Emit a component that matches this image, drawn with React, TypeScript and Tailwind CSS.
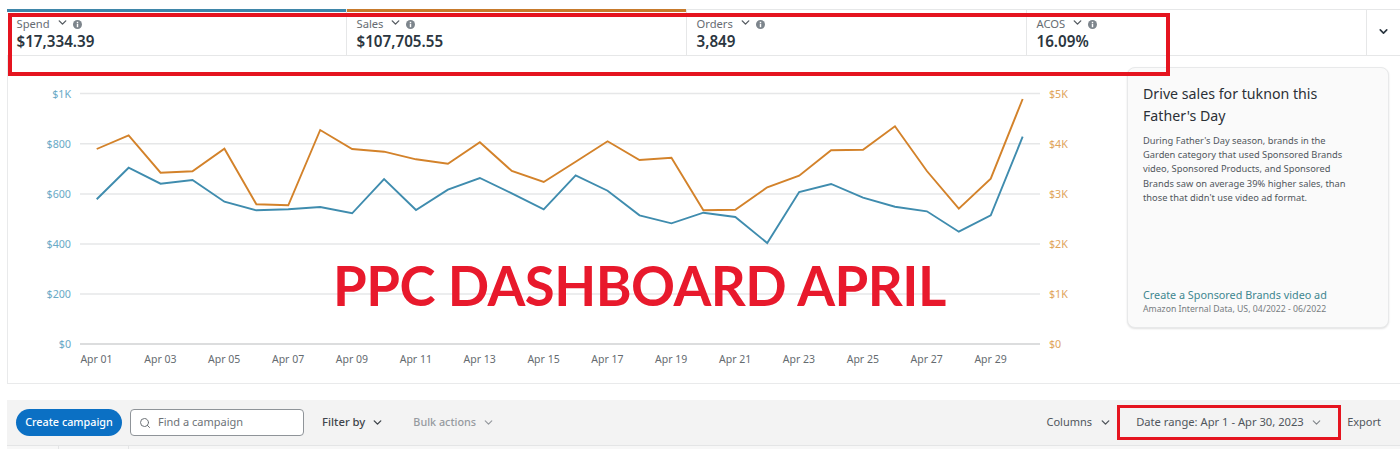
import React from 'react';
import { ChevronDown, Search } from 'lucide-react';

const sans = 'font-["Noto_Sans",sans-serif]';

const metrics = [
  { label: 'Spend', value: '$17,334.39', bar: 'bg-[#3f86a9]' },
  { label: 'Sales', value: '$107,705.55', bar: 'bg-[#c77a2c]' },
  { label: 'Orders', value: '3,849', bar: '' },
  { label: 'ACOS', value: '16.09%', bar: '' },
];

const orange = [149, 135.3, 172.7, 171.3, 148.7, 204.3, 205.3, 130, 149, 151.7, 159.3, 163.7, 142.3, 171, 182, 161.7, 141.3, 160, 157.7, 210.3, 209.7, 187.3, 175.7, 150.3, 149.7, 126.3, 171, 208.7, 178.7, 99];
const blue = [199.3, 167.7, 183.7, 180, 201.7, 210.3, 209.3, 207, 213.3, 179, 210, 189.7, 178, 193.3, 209.3, 175.3, 190.7, 215.3, 223.3, 212.7, 217, 243, 192, 184, 197.7, 206.7, 211.3, 231.7, 215.3, 136.7];

const gridY = [93.5, 143.7, 194, 244, 294, 344];
const leftLabels = ['$1K', '$800', '$600', '$400', '$200', '$0'];
const rightLabels = ['$5K', '$4K', '$3K', '$2K', '$1K', '$0'];
const days = ['01', '03', '05', '07', '09', '11', '13', '15', '17', '19', '21', '23', '25', '27', '29'];

const toPoints = (ys: number[]) => ys.map((y, i) => `${96.7 + i * 31.93},${y}`).join(' ');

const InfoDot = () => (
  <svg width="9" height="9" viewBox="0 0 10 10" className="shrink-0">
    <circle cx="5" cy="5" r="5" fill="#7d858c" />
    <rect x="4.2" y="4.2" width="1.6" height="3.8" fill="#fff" />
    <rect x="4.2" y="2" width="1.6" height="1.5" fill="#fff" />
  </svg>
);

const Chart = () => (
  <svg width="1119" height="327" viewBox="8 56 1119 327" className="block shrink-0">
    {gridY.map((y, i) => (
      <line key={y} x1="80" x2="1040" y1={y} y2={y} stroke={i === 5 ? '#d0d2d3' : '#e6e7e8'} strokeWidth="1.4" />
    ))}
    {leftLabels.map((t, i) => (
      <text key={t} x="71" y={gridY[i] + 4} textAnchor="end" fontSize="10.7" fill="#69a9c6" fontFamily="Noto Sans, sans-serif">{t}</text>
    ))}
    {rightLabels.map((t, i) => (
      <text key={t} x="1049" y={gridY[i] + 4} fontSize="10.7" fill="#e0a45c" fontFamily="Noto Sans, sans-serif">{t}</text>
    ))}
    {days.map((d, i) => (
      <text key={d} x={96.5 + i * 63.86} y="363" textAnchor="middle" fontSize="10.5" fill="#656b70" fontFamily="Noto Sans, sans-serif">Apr {d}</text>
    ))}
    <polyline points={toPoints(orange)} fill="none" stroke="#d3822a" strokeWidth="1.9" />
    <polyline points={toPoints(blue)} fill="none" stroke="#3f8cae" strokeWidth="1.9" />
  </svg>
);

export default function App() {
  return (
    <div className={`relative w-[1400px] h-[449px] overflow-hidden bg-white pt-[9px] pl-[7px] ${sans}`}>
      {/* metric tabs */}
      <div className="flex h-[47px] border-y border-[#e6e7e8]">
        {metrics.map((m) => (
          <div key={m.label} className="relative w-[340px] border-r border-[#e6e7e8] pl-[9.5px] pt-[5px]">
            {m.bar && <div className={`absolute left-0 right-0 -top-px h-[3px] ${m.bar}`} />}
            <div className="flex items-center h-[18px] text-[11.2px] text-[#666c72]">
              <span>{m.label}</span>
              <ChevronDown size={13} strokeWidth={2.6} className="ml-[6px] mb-[3px] text-[#565c62]" />
              <span className="ml-[4px]"><InfoDot /></span>
            </div>
            <div className="text-[15.2px] leading-[17px] font-semibold text-[#2b3640]">{m.value}</div>
          </div>
        ))}
        <div className="flex flex-1 items-center justify-center pb-[2px]">
          <ChevronDown size={13} strokeWidth={3} className="text-[#2b3640]" />
        </div>
      </div>

      {/* chart and tip card */}
      <div className="flex h-[328px] border-l border-b border-[#e9eaeb]">
        <Chart />
        <div className="flex flex-col justify-between w-[262px] h-[261px] mt-[11px] rounded-lg border border-[#e8e9ea] bg-[#fafafa] pl-[15px] pr-[12px] pt-[15px] pb-[10px] shadow-[0_1px_2px_rgba(0,0,0,0.12)]">
          <div>
            <div className="text-[14.2px] leading-[21.5px] text-[#2b3036]">Drive sales for tuknon this<br />Father's Day</div>
            <div className="mt-[8px] text-[9.3px] leading-[14.2px] text-[#50565c]">
              During Father's Day season, brands in the<br />
              Garden category that used Sponsored Brands<br />
              video, Sponsored Products, and Sponsored<br />
              Brands saw on average 39% higher sales, than<br />
              those that didn't use video ad format.
            </div>
          </div>
          <div>
            <div className="text-[10.8px] leading-[15px] text-[#3e8790]">Create a Sponsored Brands video ad</div>
            <div className="text-[8.7px] leading-[15px] text-[#777c81]">Amazon Internal Data, US, 04/2022 - 06/2022</div>
          </div>
        </div>
      </div>

      {/* toolbar */}
      <div className="flex items-center h-[45px] mt-[16px] bg-[#f3f3f3] pl-[9px] text-[11px]">
        <button className="h-[27px] w-[106px] rounded-full bg-[#0b70c4] text-[10.8px] text-white font-medium">Create campaign</button>
        <div className="flex items-center w-[174px] h-[27px] ml-[8px] rounded border border-[#8f9499] bg-white pl-[8px] text-[#6d7277]">
          <Search size={12} strokeWidth={2} className="text-[#6d7277]" />
          <span className="ml-[7px]">Find a campaign</span>
        </div>
        <span className="ml-[18px] text-[11.3px] font-medium text-[#3f454b]">Filter by</span>
        <ChevronDown size={13} strokeWidth={2.6} className="ml-[6px] text-[#3f454b]" />
        <span className="ml-[29px] text-[10.8px] text-[#969a9f] font-medium">Bulk actions</span>
        <ChevronDown size={13} strokeWidth={2.2} className="ml-[6px] text-[#969a9f]" />
        <span className="ml-auto text-[#50565c]">Columns</span>
        <ChevronDown size={13} strokeWidth={2.6} className="ml-[7px] text-[#50565c]" />
        <div className="flex items-center w-[224px] h-[35px] ml-[5px] border-[3.5px] border-[#e5141f] pl-[16px] text-[11.2px] text-[#50565c]">
          <span>Date range: Apr 1 - Apr 30, 2023</span>
          <ChevronDown size={13} strokeWidth={2} className="ml-[6px] text-[#80858a]" />
        </div>
        <span className="ml-[6px] mr-[19px] text-[#50565c]">Export</span>
      </div>

      {/* top of the table under the toolbar */}
      <div className="flex h-[4px] border-t border-[#e4e5e6] bg-[#f7f7f7]">
        <div className="w-[52px] border-r border-[#e4e5e6]" />
        <div className="w-[70px] border-r border-[#e4e5e6]" />
      </div>

      {/* annotations on top of the screenshot */}
      <div className="absolute left-[8px] top-[13px] w-[1162px] h-[63px] border-[4px] border-[#e5141f]" />
      <div className="absolute left-[333px] top-[250px] text-[54.5px] leading-[70px] font-bold tracking-[-0.5px] text-[#e8192c] font-['Lato',sans-serif] whitespace-nowrap">PPC DASHBOARD APRIL</div>
    </div>
  );
}
